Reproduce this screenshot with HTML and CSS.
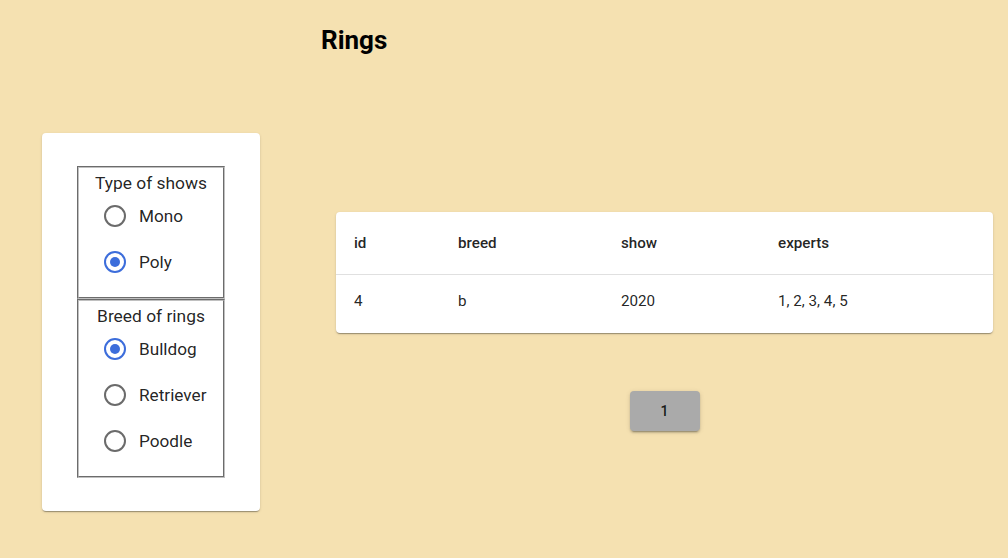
FILE: index.html
```html
<!DOCTYPE html>
<html lang="en">
<head>
<meta charset="utf-8">
<title>Rings</title>
<link rel="stylesheet" href="styles.css">
</head>
<body>
<header class="header">
  <h1 class="title">Rings</h1>
</header>
<main class="layout">
  <aside class="filters">
    <div class="group">
      <div class="legend">Type of shows</div>
      <label class="option">
        <svg class="radio" viewBox="0 0 24 24"><circle cx="12" cy="12" r="10" class="ring"/></svg>
        <span>Mono</span>
      </label>
      <label class="option checked">
        <svg class="radio" viewBox="0 0 24 24"><circle cx="12" cy="12" r="10" class="ring"/><circle cx="12" cy="12" r="5" class="dot"/></svg>
        <span>Poly</span>
      </label>
    </div>
    <div class="group">
      <div class="legend">Breed of rings</div>
      <label class="option checked">
        <svg class="radio" viewBox="0 0 24 24"><circle cx="12" cy="12" r="10" class="ring"/><circle cx="12" cy="12" r="5" class="dot"/></svg>
        <span>Bulldog</span>
      </label>
      <label class="option">
        <svg class="radio" viewBox="0 0 24 24"><circle cx="12" cy="12" r="10" class="ring"/></svg>
        <span>Retriever</span>
      </label>
      <label class="option">
        <svg class="radio" viewBox="0 0 24 24"><circle cx="12" cy="12" r="10" class="ring"/></svg>
        <span>Poodle</span>
      </label>
    </div>
  </aside>
  <section class="content">
    <div class="table-card">
      <table class="table">
        <colgroup>
          <col class="c-id"><col class="c-breed"><col class="c-show"><col>
        </colgroup>
        <thead>
          <tr><th>id</th><th>breed</th><th>show</th><th>experts</th></tr>
        </thead>
        <tbody>
          <tr><td>4</td><td>b</td><td>2020</td><td>1, 2, 3, 4, 5</td></tr>
        </tbody>
      </table>
    </div>
    <div class="pager">
      <button class="page-btn">1</button>
    </div>
  </section>
</main>
</body>
</html>
```
FILE: styles.css
```css
html, body {
  margin: 0;
  padding: 0;
}
body {
  background: #f5e1b1;
  font-family: Roboto, "Noto Sans", sans-serif;
  color: rgba(0, 0, 0, 0.87);
  width: 1008px;
  height: 558px;
  overflow: hidden;
}
.header {
  padding: 25px 0 0 321px;
}
.title {
  margin: 0;
  font-size: 26px;
  line-height: 30px;
  font-weight: 700;
  color: #000;
}
.layout {
  display: flex;
  align-items: flex-start;
  margin-top: 78px;
  padding-left: 42px;
}
.filters {
  width: 218px;
  box-sizing: border-box;
  padding: 33px 35px 33px 35px;
  background: #fff;
  border-radius: 4px;
  box-shadow: 0 2px 1px -1px rgba(0,0,0,.2), 0 1px 1px 0 rgba(0,0,0,.14), 0 1px 3px 0 rgba(0,0,0,.12);
}
.group {
  border: 2px groove #c0c0c0;
  padding: 6px 0 12px;
}
.legend {
  text-align: center;
  font-size: 17.4px;
  line-height: 19px;
  color: rgba(0,0,0,0.87);
  white-space: nowrap;
}
.option {
  display: flex;
  align-items: center;
  height: 46px;
  padding-left: 24px;
  gap: 12px;
  font-size: 17.2px;
  line-height: 19px;
  color: rgba(0,0,0,0.87);
  white-space: nowrap;
}
.radio {
  width: 24px;
  height: 24px;
  flex: none;
}
.ring {
  fill: none;
  stroke: #6b6b6b;
  stroke-width: 2;
}
.checked .ring {
  stroke: #3c6ddb;
}
.dot {
  fill: #3c6ddb;
}
.content {
  margin-left: 76px;
  margin-top: 79px;
  width: 657px;
}
.table-card {
  background: #fff;
  border-radius: 4px;
  box-shadow: 0 2px 1px -1px rgba(0,0,0,.2), 0 1px 1px 0 rgba(0,0,0,.14), 0 1px 3px 0 rgba(0,0,0,.12);
  overflow: hidden;
}
.table {
  width: 100%;
  border-collapse: collapse;
  table-layout: fixed;
  font-size: 15.2px;
}
.c-id { width: 104px; }
.c-breed { width: 163px; }
.c-show { width: 157px; }
.table th, .table td {
  text-align: left;
  padding: 0 0 0 18px;
  line-height: 17px;
}
.table th {
  height: 62px;
  font-weight: 500;
  border-bottom: 1px solid #e0e0e0;
  color: rgba(0,0,0,0.87);
}
.table td {
  height: 53px;
  padding-bottom: 5px;
  font-weight: 400;
  color: rgba(0,0,0,0.87);
}
.pager {
  display: flex;
  justify-content: center;
  margin-top: 58px;
}
.page-btn {
  width: 70px;
  height: 40px;
  border: none;
  border-radius: 4px;
  background: #aaaaaa;
  font-family: Roboto, sans-serif;
  font-size: 14px;
  font-weight: 500;
  color: rgba(0,0,0,0.87);
  box-shadow: 0 3px 1px -2px rgba(0,0,0,.2), 0 2px 2px 0 rgba(0,0,0,.14), 0 1px 5px 0 rgba(0,0,0,.12);
}
```
